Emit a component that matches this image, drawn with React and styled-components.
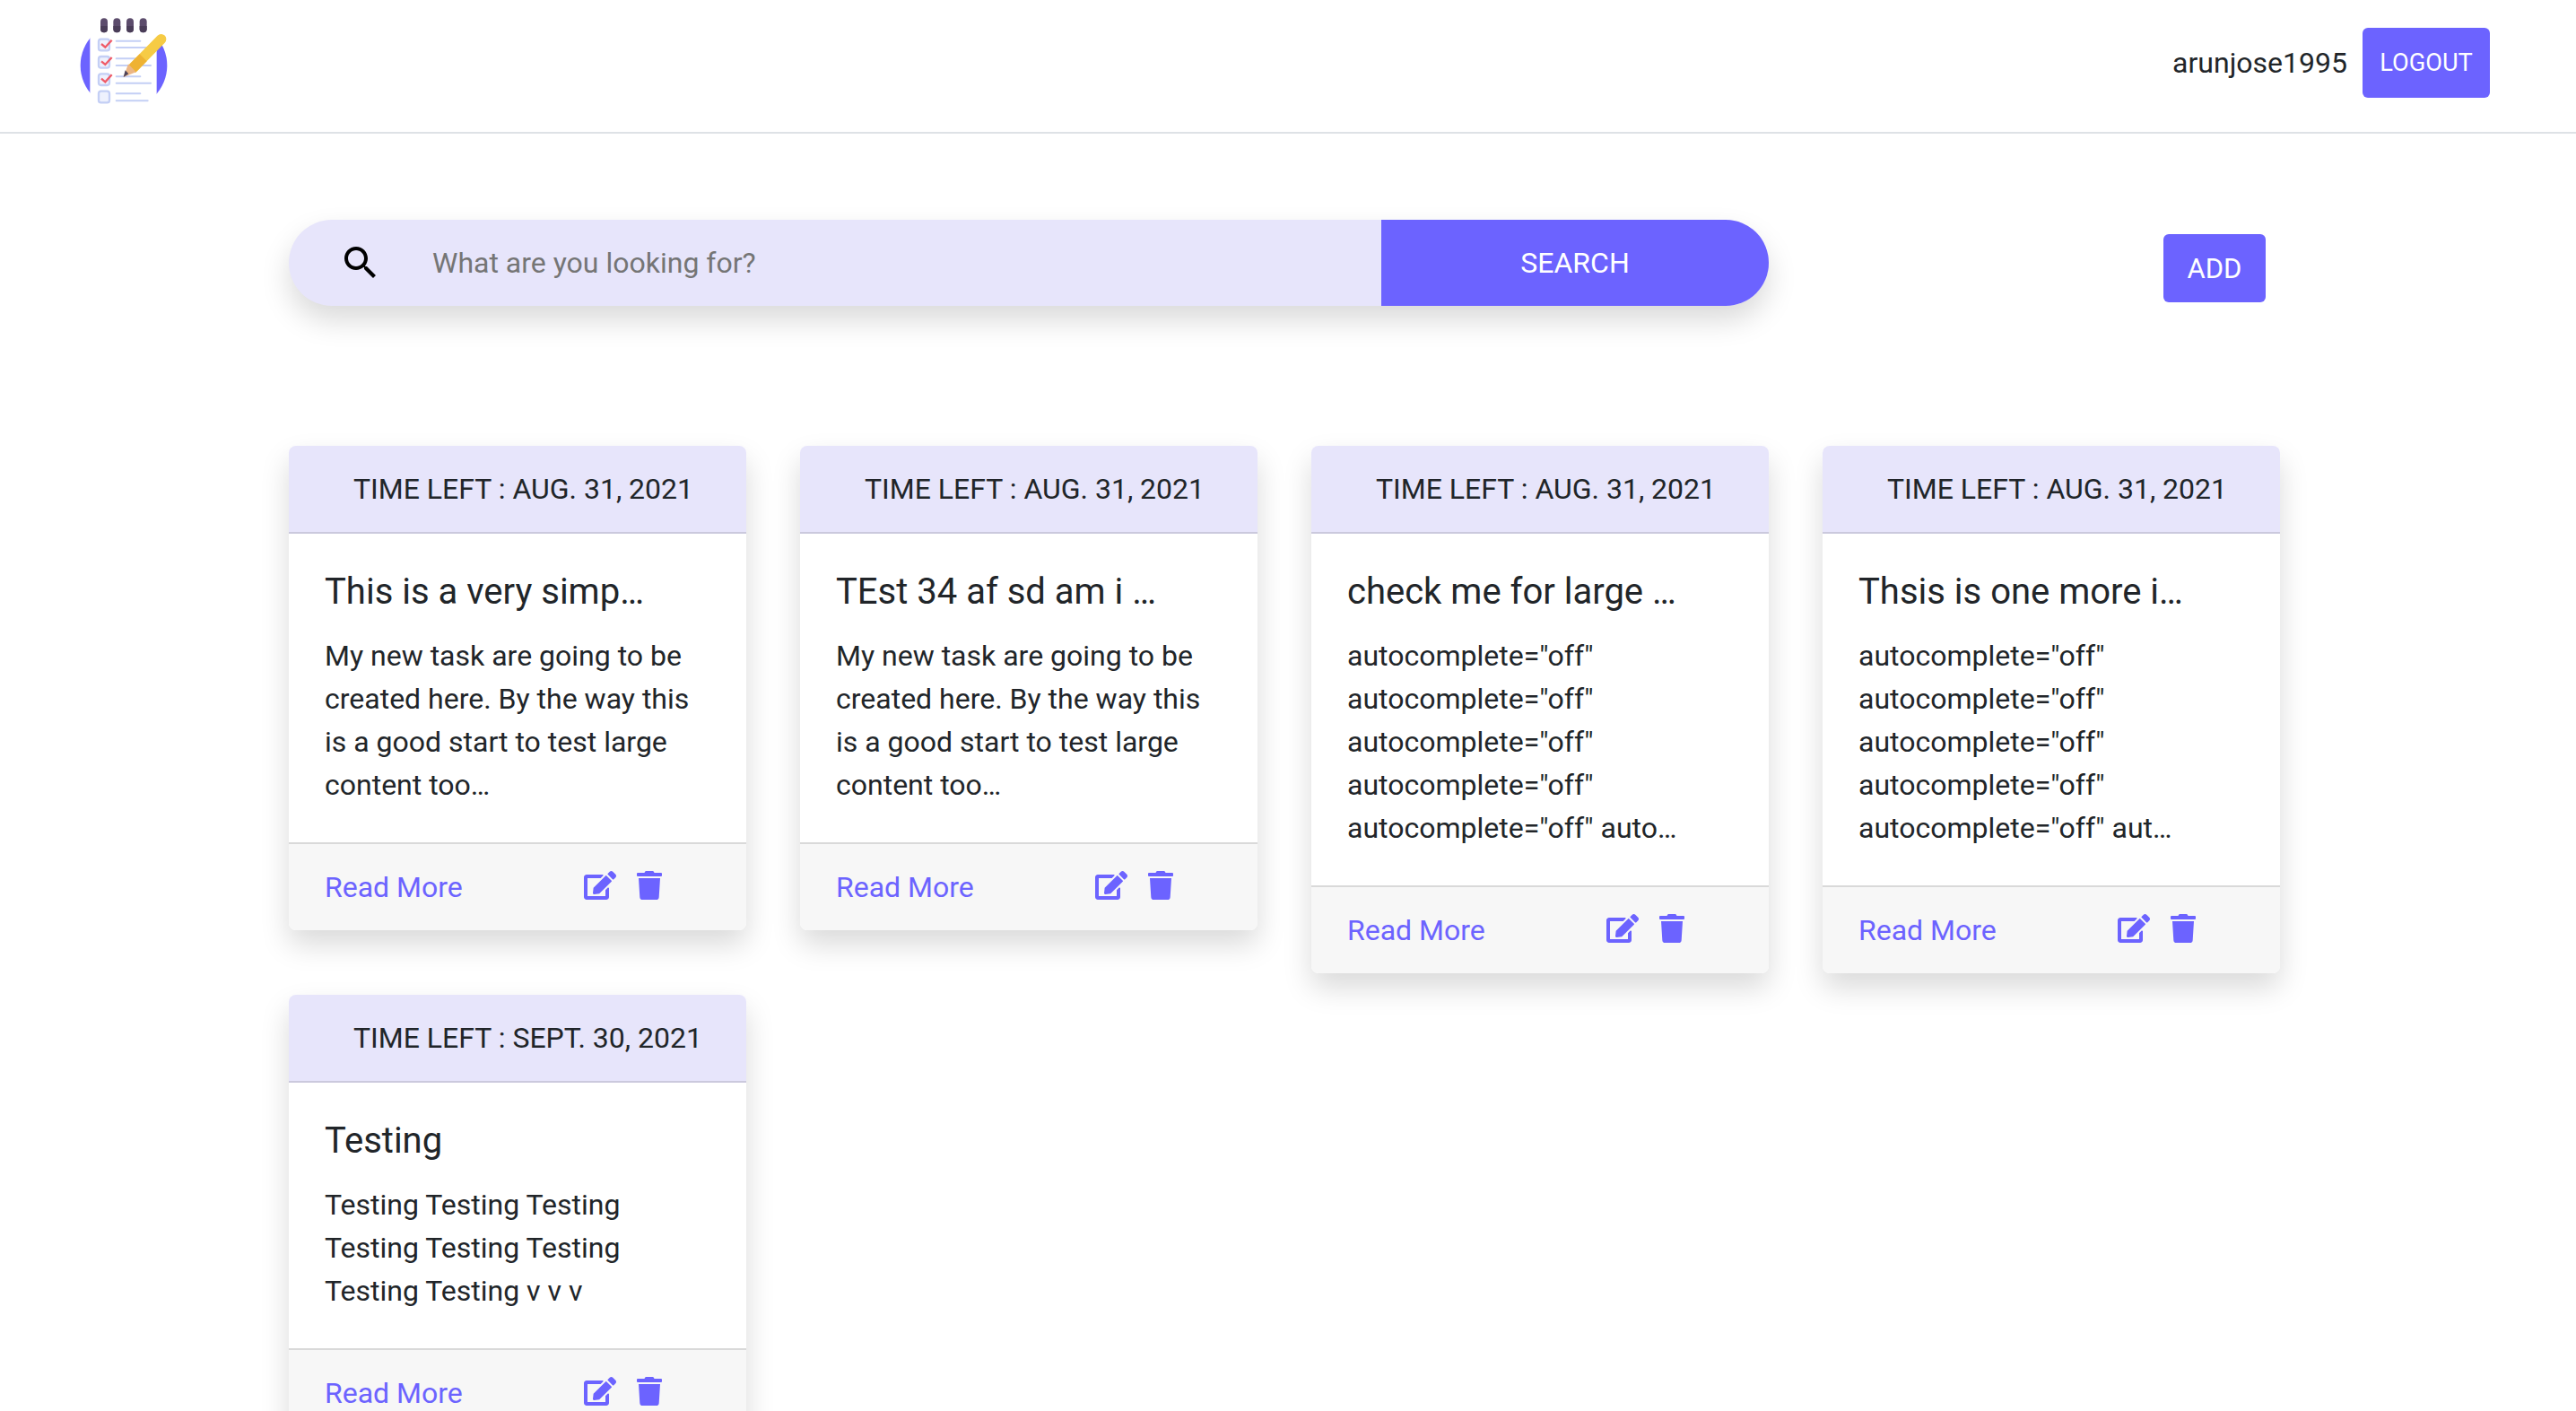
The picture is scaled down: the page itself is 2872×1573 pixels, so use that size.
import React from "react";
import styled, { createGlobalStyle } from "styled-components";
import { FaEdit, FaTrash } from "react-icons/fa";

const PRIMARY = "#6c63ff";
const TINT = "#e7e5fb";

const Global = createGlobalStyle`
  html, body { margin: 0; padding: 0; height: 100%; overflow: hidden; background: #fff; }
  body { font-family: Roboto, "Liberation Sans", sans-serif; font-size: 32px; line-height: 48px; color: #212529; }
  * { box-sizing: border-box; }
`;

const Page = styled.div`
  height: 100vh;
  overflow: hidden;
`;

const TopBar = styled.header`
  height: 149px;
  display: flex;
  align-items: flex-start;
  justify-content: space-between;
  padding: 0 96px 0 88px;
  border-bottom: 2px solid #dee2e6;
`;

const LogoWrap = styled.svg`
  width: 100px;
  height: 100px;
  margin-top: 18px;
  display: block;
  filter: blur(0.4px);
`;

const UserArea = styled.div`
  display: flex;
  align-items: center;
  gap: 17px;
  margin-top: 31px;
  height: 78px;
`;

const UserName = styled.span`
  font-size: 32px;
`;

const LogoutButton = styled.button`
  width: 142px;
  height: 78px;
  border: 0;
  border-radius: 6px;
  background: ${PRIMARY};
  color: #fff;
  font-family: inherit;
  font-size: 27.2px;
  padding: 0;
`;

const Content = styled.main`
  padding: 96px 0 0 322px;
  width: 2541px;
`;

const SearchRow = styled.div`
  display: flex;
  align-items: flex-start;
  justify-content: space-between;
  padding-right: 15px;
  height: 96px;
  margin-bottom: 156px;
`;

const SearchBar = styled.form`
  width: 1650px;
  height: 96px;
  display: flex;
  align-items: center;
  padding-left: 56px;
  background: ${TINT};
  border-radius: 48px;
  box-shadow: 0 16px 32px rgba(0, 0, 0, 0.15);
  overflow: hidden;
`;

const SearchIcon = styled.svg`
  width: 48px;
  height: 48px;
  flex: none;
  fill: #000;
`;

const SearchInput = styled.input`
  flex: 1;
  min-width: 0;
  margin-left: 56px;
  border: 0;
  outline: 0;
  background: transparent;
  font-family: inherit;
  font-size: 32px;
  color: #212529;
  padding: 0;
  &::placeholder { color: #757575; opacity: 1; }
`;

const SearchButton = styled.button`
  width: 432px;
  height: 96px;
  flex: none;
  border: 0;
  background: ${PRIMARY};
  color: #fff;
  font-family: inherit;
  font-size: 32px;
  padding: 0;
`;

const AddButton = styled.button`
  width: 114px;
  height: 76px;
  margin-top: 16px;
  border: 0;
  border-radius: 6px;
  background: ${PRIMARY};
  color: #fff;
  font-family: inherit;
  font-size: 31px;
  padding: 0;
`;

const CardGrid = styled.section`
  display: grid;
  grid-template-columns: repeat(4, 510px);
  column-gap: 60px;
  row-gap: 24px;
  align-items: start;
`;

const Card = styled.article`
  border-radius: 8px;
  background: #fff;
  box-shadow: 0 16px 32px rgba(0, 0, 0, 0.15);
  overflow: hidden;
`;

const CardHead = styled.div`
  height: 98px;
  padding: 24px 0 24px 72px;
  background: ${TINT};
  border-bottom: 2px solid #cbc9dd;
  font-size: 32px;
  line-height: 48px;
  white-space: nowrap;
`;

const CardBody = styled.div`
  padding: 41px 40px 40px;
`;

const CardTitle = styled.h5`
  margin: 0 0 23px;
  font-size: 40px;
  font-weight: 400;
  line-height: 48px;
  white-space: nowrap;
`;

const CardText = styled.p`
  margin: 0;
  font-size: 32px;
  line-height: 48px;
`;

const CardFoot = styled.div`
  height: 98px;
  display: grid;
  grid-template-columns: 289px 1fr;
  align-items: center;
  padding: 0 40px;
  background: #f7f7f7;
  border-top: 2px solid #d9d9d9;
`;

const ReadMore = styled.a`
  color: ${PRIMARY};
  font-size: 32px;
  text-decoration: none;
`;

const Actions = styled.div`
  display: flex;
  align-items: center;
  gap: 23px;
  margin-bottom: 4px;
  color: ${PRIMARY};
`;

const EditIcon = styled(FaEdit)`
  display: block;
  flex: none;
  width: 36px;
  height: 32px;
`;

const TrashIcon = styled(FaTrash)`
  display: block;
  flex: none;
  width: 28px;
  height: 32px;
`;

function Logo() {
  return (
    <LogoWrap viewBox="85 55 300 300" aria-hidden="true">
      <circle cx="235" cy="220" r="145" fill="#6c63ff" />
      <rect x="122" y="60" width="223" height="295" fill="#fff" />
      {[157, 200, 244, 288].map((x) => (
        <g key={x}>
          <rect x={x} y="62" width="24" height="48" rx="12" fill="#5c4c6c" />
          <path d={`M${x} 88h24v10a12 12 0 0 1-24 0z`} fill="#4a3d58" />
        </g>
      ))}
      {[132, 190, 248, 306].map((y) => (
        <rect key={y} x="151" y={y} width="36" height="38" rx="8" fill="#eef1fd" stroke="#c4cff5" strokeWidth="7" />
      ))}
      {[0, 58, 116].map((d) => (
        <polyline key={d} points={`160,${148 + d} 173,${159 + d} 195,${135 + d}`} fill="none" stroke="#ef5b68" strokeWidth="7" />
      ))}
      <g stroke="#c4cff5" strokeWidth="6" strokeLinecap="round">
        <line x1="210" y1="138" x2="290" y2="138" />
        <line x1="210" y1="160" x2="328" y2="160" />
        <line x1="210" y1="197" x2="290" y2="197" />
        <line x1="210" y1="220" x2="325" y2="220" />
        <line x1="210" y1="257" x2="290" y2="257" />
        <line x1="210" y1="279" x2="325" y2="279" />
        <line x1="210" y1="314" x2="290" y2="314" />
        <line x1="210" y1="338" x2="315" y2="338" />
      </g>
      <line x1="268" y1="226" x2="360" y2="132" stroke="#f6cb45" strokeWidth="34" strokeLinecap="round" />
      <line x1="262" y1="232" x2="300" y2="194" stroke="#eeb233" strokeWidth="34" />
      <polygon points="250,215 276,242 234,259" fill="#ecb685" />
      <polygon points="240,236 251,248 234,259" fill="#4f4358" />
    </LogoWrap>
  );
}

const cards = [
  { time: "AUG. 31, 2021", title: "This is a very simp…", text: "My new task are going to be created here. By the way this is a good start to test large content too…" },
  { time: "AUG. 31, 2021", title: "TEst 34 af sd am i …", text: "My new task are going to be created here. By the way this is a good start to test large content too…" },
  { time: "AUG. 31, 2021", title: "check me for large …", text: 'autocomplete="off" autocomplete="off" autocomplete="off" autocomplete="off" autocomplete="off" auto…' },
  { time: "AUG. 31, 2021", title: "Thsis is one more i…", text: 'autocomplete="off" autocomplete="off" autocomplete="off" autocomplete="off" autocomplete="off" aut…' },
  { time: "SEPT. 30, 2021", title: "Testing", text: "Testing Testing Testing Testing Testing Testing Testing Testing v v v" },
];

export default function App() {
  return (
    <Page>
      <Global />
      <TopBar>
        <Logo />
        <UserArea>
          <UserName>arunjose1995</UserName>
          <LogoutButton type="button">LOGOUT</LogoutButton>
        </UserArea>
      </TopBar>
      <Content>
        <SearchRow>
          <SearchBar onSubmit={(e) => e.preventDefault()}>
            <SearchIcon viewBox="0 0 24 24" aria-hidden="true">
              <path d="M15.5 14h-.79l-.28-.27C15.41 12.59 16 11.11 16 9.5 16 5.91 13.09 3 9.5 3S3 5.91 3 9.5 5.91 16 9.5 16c1.61 0 3.09-.59 4.23-1.57l.27.28v.79l5 4.99L20.49 19l-4.99-5zm-6 0C7.01 14 5 11.99 5 9.5S7.01 5 9.5 5 14 7.01 14 9.5 11.99 14 9.5 14z" />
            </SearchIcon>
            <SearchInput placeholder="What are you looking for?" />
            <SearchButton type="submit">SEARCH</SearchButton>
          </SearchBar>
          <AddButton type="button">ADD</AddButton>
        </SearchRow>
        <CardGrid>
          {cards.map((c, i) => (
            <Card key={i}>
              <CardHead>TIME LEFT : {c.time}</CardHead>
              <CardBody>
                <CardTitle>{c.title}</CardTitle>
                <CardText>{c.text}</CardText>
              </CardBody>
              <CardFoot>
                <ReadMore href="#">Read More</ReadMore>
                <Actions>
                  <EditIcon />
                  <TrashIcon />
                </Actions>
              </CardFoot>
            </Card>
          ))}
        </CardGrid>
      </Content>
    </Page>
  );
}
